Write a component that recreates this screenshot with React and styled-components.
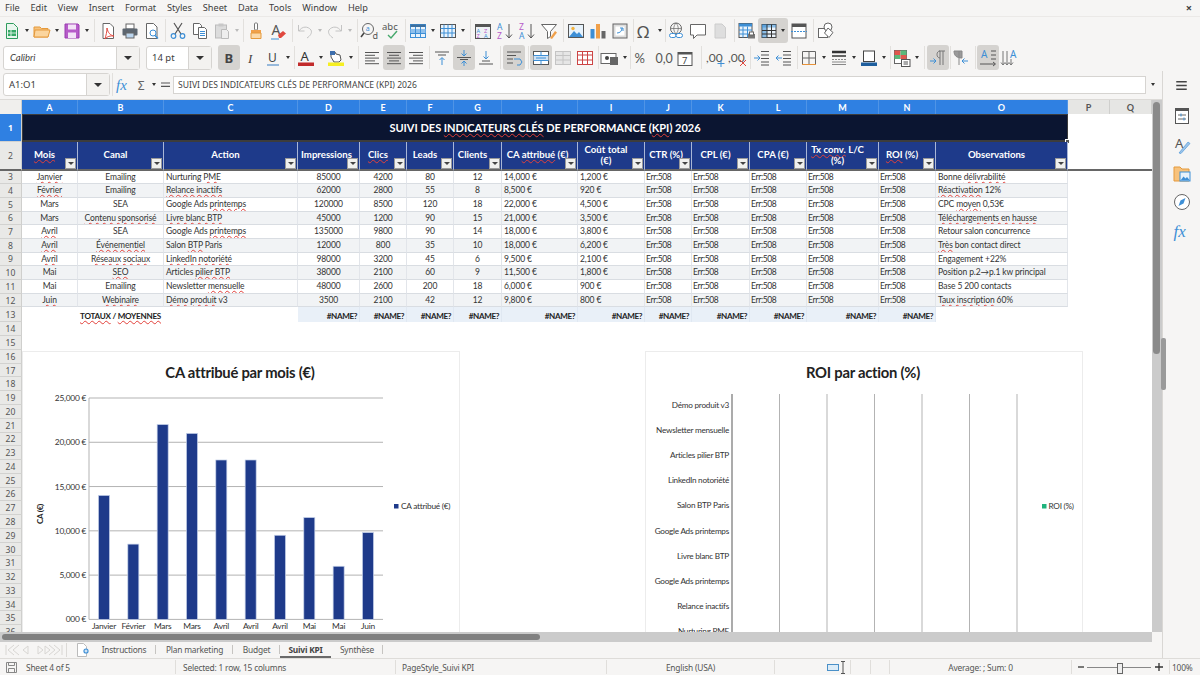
import React from 'react';
import styled, { createGlobalStyle } from 'styled-components';

const GlobalStyle = createGlobalStyle`
  html, body {
    margin: 0;
    padding: 0;
    background: #f6f5f4;
  }
  * {
    box-sizing: border-box;
  }
`;

const uiFont = `'Noto Sans', 'Open Sans', sans-serif`;
const cellFont = `Lato, 'Noto Sans', sans-serif`;

const Window = styled.div`
  width: 1200px;
  height: 675px;
  overflow: hidden;
  display: flex;
  flex-direction: column;
  background: #f6f5f4;
  color: #3d3d3d;
  font-family: ${uiFont};
`;

const MenuBar = styled.div`
  height: 17px;
  flex: none;
  display: flex;
  align-items: center;
  justify-content: space-between;
  padding: 0 8px 1px 5px;
  border-bottom: 1px solid #ebe9e7;
  font-size: 9.2px;
`;
const MenuList = styled.div`
  display: flex;
  gap: 10.8px;
`;
const CloseMark = styled.span`
  font-size: 11px;
  font-weight: 700;
  color: #444;
`;

const Toolbar = styled.div`
  height: 27px;
  flex: none;
  display: flex;
  align-items: center;
  padding-left: ${(p) => p.$pad || 1}px;
`;
const ToolBtn = styled.div`
  width: ${(p) => p.$w || 22}px;
  height: 25px;
  flex: none;
  display: flex;
  align-items: center;
  justify-content: center;
  border-radius: 3px;
  background: ${(p) => (p.$on ? '#d5d3d0' : 'transparent')};
`;
const Arrow = styled.div`
  width: 8px;
  height: 25px;
  flex: none;
  display: flex;
  align-items: center;
  justify-content: center;
  &::after {
    content: '';
    border-left: 2.5px solid transparent;
    border-right: 2.5px solid transparent;
    border-top: 3px solid ${(p) => (p.$off ? '#bbb' : '#333')};
  }
`;
const Sep = styled.div`
  width: ${(p) => p.$w || 5}px;
  height: 23px;
  flex: none;
  position: relative;
  &::after {
    content: '';
    position: absolute;
    left: 50%;
    top: 0;
    bottom: 0;
    width: 1px;
    background: #e2e0dd;
  }
`;
const Combo = styled.div`
  width: ${(p) => p.$w}px;
  height: ${(p) => p.$h || 24}px;
  margin-right: ${(p) => p.$mr || 0}px;
  flex: none;
  display: flex;
  border: 1px solid #d6d4d1;
  border-radius: 3px;
  background: #fff;
`;
const ComboText = styled.div`
  flex: 1;
  display: flex;
  align-items: center;
  padding-left: ${(p) => p.$pad || 5}px;
  font-size: 9.5px;
  font-family: ${(p) => (p.$italic ? cellFont : uiFont)};
  font-style: ${(p) => (p.$italic ? 'italic' : 'normal')};
`;
const ComboBtn = styled.div`
  width: 23px;
  flex: none;
  display: flex;
  align-items: center;
  justify-content: center;
  background: #f3f2f0;
  border-left: 1px solid #d6d4d1;
  &::after {
    content: '';
    border-left: 4px solid transparent;
    border-right: 4px solid transparent;
    border-top: 4px solid #333;
  }
`;

const Body = styled.div`
  flex: 1;
  min-height: 0;
  display: flex;
`;
const MainColumn = styled.div`
  width: 1162px;
  flex: none;
  display: flex;
  flex-direction: column;
`;
const FormulaBar = styled.div`
  height: 29px;
  flex: none;
  display: flex;
  align-items: center;
  padding: 0 0 1px 3px;
  border-bottom: 1px solid #dcdad7;
`;
const FormulaInput = styled.div`
  width: 973px;
  height: 18px;
  flex: none;
  display: flex;
  align-items: center;
  padding-left: 4px;
  background: #fff;
  border: 1px solid #d6d4d1;
  font-size: 8.6px;
  color: #444;
`;

const SheetArea = styled.div`
  flex: 1;
  min-height: 0;
  display: flex;
`;
const SheetViewport = styled.div`
  width: 1152px;
  flex: none;
  position: relative;
  overflow: hidden;
  background: #fff;
`;
const Grid = styled.div`
  display: grid;
  grid-template-columns: 22px 56px 86px 134px 62px 47px 47px 48px 76px 67px 47px 58px 57px 72px 57px 132px 42px 42px;
  grid-template-rows: 14px 28px 28.5px repeat(10, 13.7px) 15px repeat(23, 13.78px);
  font-family: ${cellFont};
`;
const ColHead = styled.div`
  display: flex;
  align-items: center;
  justify-content: center;
  font-size: 9px;
  font-weight: 700;
  color: ${(p) => (p.$sel ? '#fff' : '#555')};
  background: ${(p) => (p.$sel ? '#2f80e2' : '#e6e6e4')};
  border-right: 1px solid ${(p) => (p.$sel ? '#4f94e6' : '#cfcfcd')};
`;
const Corner = styled.div`
  background: #f0efed;
  border-right: 1px solid #cfcfcd;
`;
const RowHead = styled.div`
  grid-column: 1;
  display: flex;
  align-items: center;
  justify-content: center;
  overflow: hidden;
  padding-top: 1px;
  font-family: ${uiFont};
  font-size: 8.6px;
  font-weight: ${(p) => (p.$sel ? 700 : 400)};
  color: ${(p) => (p.$sel ? '#fff' : '#555')};
  background: ${(p) => (p.$sel ? '#2f80e2' : '#e9e9e7')};
  border-right: 1px solid #cfcfcd;
  border-bottom: ${(p) => (p.$frozen ? '2px solid #666' : '1px solid #d2d2d0')};
`;
const TitleCell = styled.div`
  grid-column: 2 / span 15;
  position: relative;
  display: flex;
  align-items: center;
  justify-content: center;
  background: #0b1531;
  border: 1px solid #3c3c3c;
  border-bottom-width: 2px;
  color: #fff;
  font-size: 11px;
  font-weight: 700;
`;
const FillHandle = styled.span`
  position: absolute;
  right: -3px;
  bottom: -4px;
  width: 5px;
  height: 5px;
  background: #555;
  border: 1px solid #fff;
`;
const HeadCell = styled.div`
  position: relative;
  display: flex;
  align-items: center;
  justify-content: center;
  padding: 0 ${(p) => (p.$narrow ? 6 : 12)}px 1px 2px;
  text-align: center;
  line-height: 11px;
  white-space: pre-line;
  background: #1e3a8a;
  border-right: 1px solid #a9b6d6;
  border-bottom: 2px solid #666;
  color: #fff;
  font-size: 9.6px;
  font-weight: 700;
`;
const FilterBtn = styled.span`
  position: absolute;
  right: 1px;
  bottom: 0;
  width: 11px;
  height: 11px;
  display: flex;
  align-items: center;
  justify-content: center;
  background: #f0f0ee;
  border: 1px solid #9a9a9a;
  &::after {
    content: '';
    border-left: 3px solid transparent;
    border-right: 3px solid transparent;
    border-top: 3px solid #444;
  }
`;
const Cell = styled.div`
  display: flex;
  align-items: flex-start;
  justify-content: ${(p) => p.$align || 'flex-start'};
  padding: 1px ${(p) => (p.$tight ? 1 : 2)}px 0;
  overflow: hidden;
  white-space: nowrap;
  line-height: 10px;
  font-size: 8.5px;
  letter-spacing: ${(p) => (p.$tight ? -0.35 : -0.12)}px;
  color: #333;
  background: ${(p) => (p.$alt ? '#f1f3f5' : '#fff')};
  border-right: 1px solid #e2e5ea;
  border-bottom: 1px solid #d9dde2;
`;
const TotalLabel = styled.div`
  grid-column: 2 / span 3;
  display: flex;
  align-items: center;
  padding: 2px 0 0 58px;
  font-size: 8.1px;
  font-weight: 700;
  letter-spacing: -0.25px;
  color: #222;
  white-space: nowrap;
`;
const TotalCell = styled.div`
  display: flex;
  align-items: center;
  justify-content: flex-end;
  padding: 2px 2px 0 0;
  font-size: 8.1px;
  font-weight: 700;
  letter-spacing: -0.4px;
  color: #222;
  background: #e9f0f8;
  border-right: 1px solid #e0e8f2;
`;
const Blank = styled.div`
  grid-column: ${(p) => p.$col || 'auto'};
  border-bottom: ${(p) => (p.$frozen ? '2px solid #666' : 'none')};
`;
const Wavy = styled.span`
  text-decoration: underline wavy #e2403a;
  text-decoration-thickness: 1px;
  text-underline-offset: 0.5px;
`;

const ChartBox = styled.div`
  position: absolute;
  left: ${(p) => p.$left}px;
  top: 251px;
  width: ${(p) => p.$width}px;
  height: 300px;
  background: #fff;
  border: 1px solid #ececec;
`;
const ChartSvg = styled.svg`
  display: block;
  font-family: ${cellFont};
  letter-spacing: -0.25px;
`;

const VScroll = styled.div`
  width: 10px;
  flex: none;
  position: relative;
  background: #cbcbcb;
`;
const VThumb = styled.div`
  position: absolute;
  left: 1px;
  top: 2px;
  width: 7px;
  height: 252px;
  border-radius: 4px;
  background: #8a8a8a;
`;
const HScroll = styled.div`
  height: 10px;
  width: 1152px;
  flex: none;
  display: flex;
  align-items: center;
  padding-left: 2px;
  background: #cbcbcb;
`;
const HThumb = styled.div`
  width: 538px;
  height: 6px;
  border-radius: 3px;
  background: #808080;
`;

const TabBar = styled.div`
  height: 16px;
  flex: none;
  display: flex;
  align-items: center;
  font-size: 8.4px;
  letter-spacing: -0.2px;
  color: #555;
`;
const NavGroup = styled.div`
  width: 66px;
  padding-left: 5px;
  display: flex;
  align-items: center;
`;
const AddTab = styled.div`
  width: 26px;
  padding-left: 9px;
  border-left: 1px solid #dcdad7;
  display: flex;
  align-items: center;
`;
const Tab = styled.div`
  height: 16px;
  width: ${(p) => p.$w}px;
  display: flex;
  align-items: center;
  justify-content: center;
  position: relative;
  font-weight: ${(p) => (p.$on ? 700 : 400)};
  color: ${(p) => (p.$on ? '#444' : '#555')};
  border-bottom: 2px solid ${(p) => (p.$on ? '#6a6a6a' : 'transparent')};
  &::after {
    content: '';
    display: ${(p) => (p.$bar ? 'block' : 'none')};
    position: absolute;
    right: 0;
    top: 3px;
    height: 9px;
    width: 1px;
    background: #c6c4c1;
  }
`;

const Sidebar = styled.div`
  flex: 1;
  border-left: 1px solid #d9d7d4;
  display: flex;
  flex-direction: column;
  align-items: center;
  position: relative;
`;
const SideMenu = styled.div`
  height: 29px;
  display: flex;
  align-items: center;
  margin-bottom: 2px;
`;
const SideIcon = styled.div`
  height: 28.6px;
  display: flex;
  align-items: center;
  justify-content: center;
`;
const SideHandle = styled.div`
  position: absolute;
  left: -2px;
  top: 267px;
  width: 5px;
  height: 52px;
  border-radius: 2px;
  background: #9a9a9a;
`;

const StatusBar = styled.div`
  height: 17px;
  flex: none;
  display: flex;
  align-items: center;
  border-top: 1px solid #dedcd9;
  font-size: 8.4px;
  letter-spacing: -0.2px;
  color: #555;
`;
const StatusCell = styled.div`
  width: ${(p) => p.$w}px;
  height: 14px;
  flex: none;
  display: flex;
  align-items: center;
  justify-content: ${(p) => p.$align || 'flex-start'};
  padding-left: ${(p) => p.$pad || 0}px;
  gap: ${(p) => p.$gap || 0}px;
  border-right: 1px solid ${(p) => (p.$plain ? 'transparent' : '#e0dedb')};
`;
const ZoomTrack = styled.div`
  width: 64px;
  height: 1px;
  background: #888;
  position: relative;
  margin: 0 4px 0 3px;
  &::after {
    content: '';
    position: absolute;
    left: 30px;
    top: -4px;
    width: 4px;
    height: 9px;
    background: #eee;
    border: 1px solid #666;
  }
`;

const Svg = ({ size = 20, children }) => (
  <svg width={size} height={size} viewBox="0 0 20 20" fill="none">
    {children}
  </svg>
);

const T = ({ x, y, s = 8, c = '#333', w = 400, st = 'normal', f = 'Noto Sans', children }) => (
  <text x={x} y={y} fontSize={s} fill={c} fontWeight={w} fontStyle={st} fontFamily={f}>
    {children}
  </text>
);

const lines = (arr, c = '#555') =>
  arr.map(([x1, y1, x2, y2], i) => <line key={i} x1={x1} y1={y1} x2={x2} y2={y2} stroke={c} />);

const alignLines = (rows) => lines(rows.map(([a, b], i) => [a, 4.5 + i * 2.8, b, 4.5 + i * 2.8]), '#555');

const icons = {
  newdoc: (
    <>
      <path d="M4.5 2.5h7l4 4v11h-11z" fill="#e9f6ee" stroke="#2f9c5d" />
      <rect x="6" y="9" width="8" height="6" fill="#36a866" />
      <path d="M9 9v6M6 12h8" stroke="#d6f0df" />
    </>
  ),
  open: (
    <>
      <path d="M2 6h6l1.5 1.5H16V16H2z" fill="#f7c27c" stroke="#e59a3c" />
      <path d="M3 9h15l-2 7H2z" fill="#fbd59e" stroke="#e59a3c" />
    </>
  ),
  save: (
    <>
      <path d="M3 3h13l1 1v13H3z" fill="#b65bc9" stroke="#9a3cb0" />
      <rect x="6" y="3.5" width="8" height="5" fill="#f3e2f7" />
      <rect x="6" y="11.5" width="8" height="5.5" fill="#f3e2f7" />
    </>
  ),
  pdf: (
    <>
      <path d="M5 2.5h7l3.5 3.5v11.5H5z" fill="#fff" stroke="#666" />
      <path d="M9 7c1 5 3 7 7 8-4-.5-7 .5-9 3 1-4 2-7 2-11z" stroke="#e0483e" />
    </>
  ),
  print: (
    <>
      <rect x="6" y="3" width="8" height="5" fill="#fff" stroke="#666" />
      <rect x="2.5" y="7.5" width="15" height="7" rx="1" fill="#5d6670" />
      <rect x="6" y="12" width="8" height="5" fill="#bcd6ef" stroke="#666" />
    </>
  ),
  preview: (
    <>
      <path d="M4.5 2.5h7l3.5 3.5v11.5H4.5z" fill="#fff" stroke="#666" />
      <circle cx="11" cy="12" r="3" stroke="#3d8fd6" />
      <path d="M13 14.5l3 3" stroke="#3d8fd6" strokeWidth="1.5" />
    </>
  ),
  cut: (
    <>
      <path d="M6 2l7 11M14 2L7 13" stroke="#555" strokeWidth="1.2" />
      <circle cx="5.5" cy="15" r="2.3" stroke="#3d8fd6" strokeWidth="1.2" />
      <circle cx="14.5" cy="15" r="2.3" stroke="#3d8fd6" strokeWidth="1.2" />
    </>
  ),
  copy: (
    <>
      <path d="M3.5 2.5h6l2 2v9h-8z" fill="#fff" stroke="#666" />
      <path d="M8.5 6.5h6l2 2v9h-8z" fill="#fff" stroke="#666" />
      {lines([[10, 10.5, 15, 10.5], [10, 12.5, 15, 12.5], [10, 14.5, 15, 14.5]], '#3d8fd6')}
    </>
  ),
  paste: (
    <>
      <rect x="3.5" y="4" width="11" height="13" fill="#dcdcdc" stroke="#bbb" />
      <rect x="6.5" y="2.5" width="5" height="3" fill="#c8c8c8" />
      <path d="M9.5 8.5h5l2 2v7h-7z" fill="#eee" stroke="#bbb" />
    </>
  ),
  clone: (
    <>
      <rect x="8.5" y="2" width="3" height="7" rx="1" fill="#fff" stroke="#777" />
      <path d="M5 9h10v3H5z" fill="#f0a04a" />
      <path d="M5 12h10v5.5H5z" fill="#fbd9a9" stroke="#e59a3c" />
    </>
  ),
  clear: (
    <>
      <T x="3.5" y="14" s="14" c="#555">A</T>
      <path d="M10 14l5-4 3 2.5-5 4.5h-2z" fill="#e0483e" />
      <path d="M3 18h8" stroke="#3d8fd6" />
    </>
  ),
  undo: (
    <>
      <path d="M3.5 4v6h6" stroke="#c4c4c4" />
      <path d="M4 10c3-5 9-5 12-1 1.5 3-1 6-4 8" stroke="#c4c4c4" />
    </>
  ),
  redo: (
    <>
      <path d="M16.5 4v6h-6" stroke="#c4c4c4" />
      <path d="M16 10c-3-5-9-5-12-1-1.5 3 1 6 4 8" stroke="#c4c4c4" />
    </>
  ),
  find: (
    <>
      <circle cx="8" cy="8" r="5.5" stroke="#666" />
      <path d="M4 12l-3 4" stroke="#444" strokeWidth="1.6" />
      <T x="5.8" y="10" s="7" c="#3d8fd6">a</T>
      <T x="12.5" y="18" s="9" c="#555">d</T>
    </>
  ),
  spell: (
    <>
      <T x="0" y="9" s="9.5" c="#555">abc</T>
      <path d="M6 14l3 3 6-7" stroke="#46a86c" strokeWidth="1.4" />
    </>
  ),
  tableblue: (
    <>
      <rect x="2.5" y="3.5" width="15" height="13" fill="#eaf3fb" stroke="#3d8fd6" />
      <rect x="2.5" y="3.5" width="15" height="2.5" fill="#3d6f9e" />
      <rect x="2.5" y="8" width="15" height="4" fill="#8fc0ec" />
      {lines([[7.5, 6, 7.5, 16.5], [12.5, 6, 12.5, 16.5], [2.5, 12.5, 17.5, 12.5]], '#3d8fd6')}
    </>
  ),
  tablegrid: (
    <>
      <rect x="2.5" y="3.5" width="15" height="13" fill="#eaf3fb" stroke="#555" />
      {lines([[6, 3.5, 6, 16.5], [10, 3.5, 10, 16.5], [14, 3.5, 14, 16.5], [2.5, 7.5, 17.5, 7.5], [2.5, 12, 17.5, 12]], '#3d8fd6')}
    </>
  ),
  sortblock: (
    <>
      <rect x="2.5" y="3.5" width="15" height="14" fill="#eef1f4" stroke="#555" />
      <rect x="2.5" y="3.5" width="15" height="2.5" fill="#555" />
      <T x="3.5" y="11.5" s="5.6" c="#3d8fd6">A</T>
      <T x="11" y="11.5" s="5.6" c="#b65bc9">Z</T>
      <T x="3.5" y="17" s="5.6" c="#b65bc9">Z</T>
      <T x="11" y="17" s="5.6" c="#3d8fd6">A</T>
    </>
  ),
  az: (
    <>
      <T x="2" y="9" s="8.5" c="#3d8fd6">A</T>
      <T x="2" y="18" s="8.5" c="#b65bc9">Z</T>
      <path d="M14 3v14M11 13.5l3 3.5 3-3.5" stroke="#555" />
    </>
  ),
  za: (
    <>
      <T x="2" y="9" s="8.5" c="#b65bc9">Z</T>
      <T x="2" y="18" s="8.5" c="#3d8fd6">A</T>
      <path d="M14 3v14M11 13.5l3 3.5 3-3.5" stroke="#555" />
    </>
  ),
  filter: (
    <>
      <path d="M2.5 3.5h15l-6 7v5l-3 2v-7z" fill="#fff" stroke="#666" />
      <path d="M11 17l5-7 2 1.5-5 6.5z" fill="#f0a04a" />
    </>
  ),
  image: (
    <>
      <rect x="2.5" y="3.5" width="15" height="13" fill="#e7f2fb" stroke="#555" />
      <circle cx="7" cy="7.5" r="1.7" fill="#f3b23e" />
      <path d="M3 16l5-6 3 3 2-2 4 5z" fill="#3d8fd6" />
    </>
  ),
  chart: (
    <>
      <rect x="2.5" y="8" width="4" height="9.5" fill="#3d8fd6" />
      <rect x="8" y="3" width="4" height="14.5" fill="#f0a04a" />
      <rect x="13.5" y="10" width="4" height="7.5" fill="#666" />
    </>
  ),
  pivot: (
    <>
      <rect x="3" y="3" width="14" height="14" fill="#ddd" stroke="#666" />
      <rect x="5.5" y="5.5" width="9" height="9" fill="#fff" />
      <path d="M7 12c3 0 5-2 5-5M10 7h3v3" stroke="#3d8fd6" />
    </>
  ),
  omega: <T x="2" y="16.5" s="17" c="#555">Ω</T>,
  link: (
    <>
      <circle cx="10" cy="7.5" r="5.5" stroke="#666" />
      <path d="M4.5 7.5h11M10 2c-3 3.5-3 7.5 0 11M10 2c3 3.5 3 7.5 0 11" stroke="#666" strokeWidth=".7" />
      <rect x="3.5" y="12.5" width="6.5" height="4" rx="2" stroke="#3d8fd6" fill="#fff" />
      <rect x="10" y="12.5" width="6.5" height="4" rx="2" stroke="#3d8fd6" fill="#fff" />
    </>
  ),
  comment: <path d="M2.5 3.5h15v10.5H9l-3.5 3.5V14h-3z" fill="#fff" stroke="#666" />,
  docoff: <path d="M5 3h7l3.5 3.5V17H5z" fill="#dedede" stroke="#ccc" />,
  freeze: (
    <>
      <rect x="2" y="2.5" width="13" height="14" fill="#eaf3fb" stroke="#555" />
      <rect x="2" y="2.5" width="13" height="3" fill="#3d8fd6" />
      {lines([[6, 5.5, 6, 16.5], [10.5, 5.5, 10.5, 16.5], [2, 9, 15, 9], [2, 13, 15, 13]], '#3d8fd6')}
      <rect x="11" y="13" width="7" height="4.5" fill="#777" />
      <rect x="12.5" y="11" width="4" height="3" fill="#fff" stroke="#666" />
    </>
  ),
  split: (
    <>
      <rect x="3" y="3.5" width="14" height="13" fill="#eaf3fb" stroke="#444" />
      <path d="M3 3.5h5v13H3z" fill="#3d8fd6" opacity=".55" />
      <path d="M3 3.5h14v3H3z" fill="#3d8fd6" opacity=".55" />
      {lines([[3, 9.5, 17, 9.5], [3, 13, 17, 13], [8, 3.5, 8, 16.5], [12.5, 3.5, 12.5, 16.5]], '#333')}
    </>
  ),
  headfoot: (
    <>
      <rect x="3" y="3" width="14" height="14" fill="#fff" stroke="#555" />
      <rect x="3" y="3" width="14" height="3" fill="#555" />
      <path d="M2 10.5h16" stroke="#3d8fd6" strokeDasharray="2 1" />
    </>
  ),
  shapes: (
    <>
      <rect x="2.5" y="7.5" width="9" height="9" fill="#fff" stroke="#666" />
      <circle cx="12" cy="6" r="4" fill="#fff" stroke="#666" />
      <path d="M12 7l5 4.5-4 5-4.5-4.5z" fill="#fff" stroke="#666" />
    </>
  ),
  bold: <T x="5.5" y="15" s="13" c="#444" w={700}>B</T>,
  italic: <T x="7" y="15" s="13" c="#444" st="italic" f="Liberation Serif">I</T>,
  under: (
    <>
      <T x="5" y="14" s="12" c="#444">U</T>
      <path d="M4 17h12" stroke="#6f9fd0" strokeWidth="1.4" />
    </>
  ),
  color: (
    <>
      <T x="4.5" y="13" s="13" c="#333">A</T>
      <rect x="2" y="14.5" width="16" height="3.5" fill="#c22b2b" />
    </>
  ),
  hilite: (
    <>
      <path d="M5 4h4l1 2 4 1 1 5-2 2H8L5 9z" fill="#fff" stroke="#555" />
      <rect x="4" y="3" width="5" height="4" fill="#3d6fae" />
      <rect x="2" y="14.5" width="16" height="3.5" fill="#f6ef22" />
    </>
  ),
  left: alignLines([[3, 17], [3, 13], [3, 17], [3, 13], [3, 17]]),
  center: alignLines([[3, 17], [5, 15], [3, 17], [5, 15], [3, 17]]),
  right: alignLines([[3, 17], [7, 17], [3, 17], [7, 17], [3, 17]]),
  vtop: (
    <>
      <path d="M3 4h14M6 7h8" stroke="#555" />
      <path d="M10 17v-7M7.5 12L10 9.5l2.5 2.5" stroke="#3d8fd6" />
    </>
  ),
  vmid: (
    <>
      <path d="M3 9.5h14M6 11.5h8" stroke="#555" />
      <path d="M10 2v6M7.5 5.5L10 8l2.5-2.5M10 18v-5M7.5 15.5L10 13l2.5 2.5" stroke="#3d8fd6" />
    </>
  ),
  vbot: (
    <>
      <path d="M3 16h14M6 13h8" stroke="#555" />
      <path d="M10 3v8M7.5 8.5L10 11l2.5-2.5" stroke="#3d8fd6" />
    </>
  ),
  wrap: (
    <>
      <path d="M3 4h14M3 7.5h9M3 11h6M3 15h6" stroke="#555" />
      <path d="M10 11h6l2 3-2 3h-3" stroke="#3d8fd6" />
    </>
  ),
  merge: (
    <>
      <rect x="2.5" y="3.5" width="15" height="13" fill="#fff" stroke="#555" />
      <rect x="2.5" y="7.5" width="15" height="5" fill="#cfe3f6" />
      {lines([[2.5, 7.5, 17.5, 7.5], [2.5, 12.5, 17.5, 12.5]], '#3d8fd6')}
      <path d="M5 10h10M10 3.5v4M10 12.5v4" stroke="#3d8fd6" />
    </>
  ),
  mergeoff: (
    <>
      <rect x="2.5" y="3.5" width="15" height="13" fill="#e6e6e6" stroke="#c4c4c4" />
      {lines([[2.5, 7.5, 17.5, 7.5], [2.5, 12, 17.5, 12], [10, 3.5, 10, 16.5]], '#c4c4c4')}
    </>
  ),
  splitred: (
    <>
      <rect x="2.5" y="3.5" width="15" height="13" fill="#fff" stroke="#c44" />
      {lines([[2.5, 7, 17.5, 7], [2.5, 12, 17.5, 12], [7.5, 3.5, 7.5, 16.5], [12.5, 3.5, 12.5, 16.5]], '#c44')}
    </>
  ),
  numfmt: (
    <>
      <rect x="1" y="5.5" width="15" height="10" fill="#fff" stroke="#666" />
      <circle cx="7" cy="10" r="2" fill="#444" />
      <rect x="10" y="9" width="8" height="8" fill="#666" />
    </>
  ),
  percent: <T x="3.5" y="15" s="13" c="#555" f="Lato">%</T>,
  number: <T x="2.5" y="15" s="12.5" c="#555" f="Lato">0,0</T>,
  date: (
    <>
      <rect x="3" y="4.5" width="14" height="13" fill="#fff" stroke="#555" />
      <path d="M3 4.5h14v2H3z" fill="#555" />
      <T x="7" y="15.5" s="9.5" c="#444">7</T>
    </>
  ),
  decadd: (
    <>
      <T x="0" y="14" s="12" c="#555" f="Lato">,00</T>
      <path d="M15 12v7M11.5 15.5h7" stroke="#3d8fd6" />
    </>
  ),
  decdel: (
    <>
      <T x="0" y="14" s="12" c="#555" f="Lato">,00</T>
      <path d="M12 12l6 6M18 12l-6 6" stroke="#e0483e" />
    </>
  ),
  indent: (
    <>
      <path d="M9 3.5h8M9 7h8M9 10.5h8M9 14h8M9 17h8" stroke="#555" />
      <path d="M2 10h6M5.5 7.5L8 10l-2.5 2.5" stroke="#3d8fd6" />
    </>
  ),
  outdent: (
    <>
      <path d="M9 3.5h8M9 7h8M9 10.5h8M9 14h8M9 17h8" stroke="#555" />
      <path d="M8 10H2M4.5 7.5L2 10l2.5 2.5" stroke="#3d8fd6" />
    </>
  ),
  borders: (
    <>
      <path d="M3.5 16.5v-13h13v13" stroke="#666" />
      <path d="M3.5 10h13M10 3.5v13" stroke="#666" />
      <path d="M3 16.5h14" stroke="#e8933a" />
    </>
  ),
  borderstyle: (
    <>
      <path d="M3 4h14" stroke="#333" strokeWidth="2.5" />
      <path d="M3 8h14" stroke="#333" strokeWidth="1.5" />
      <path d="M3 11.5h14" stroke="#888" strokeDasharray="2 1" />
      <path d="M3 14h14M3 16.5h14" stroke="#888" />
    </>
  ),
  bordercolor: (
    <>
      <rect x="4.5" y="3" width="11" height="10.5" fill="#fff" stroke="#444" />
      <rect x="2" y="14.5" width="16" height="3.5" fill="#1f5f9e" />
    </>
  ),
  condfmt: (
    <>
      <rect x="2.5" y="2.5" width="12" height="13" fill="#fff" stroke="#666" />
      <rect x="2.5" y="2.5" width="6" height="4.5" fill="#e0584e" />
      <rect x="8.5" y="2.5" width="6" height="4.5" fill="#5cb87a" />
      <rect x="2.5" y="7" width="6" height="4" fill="#5cb87a" />
      <rect x="8.5" y="7" width="6" height="4" fill="#e0584e" />
      <rect x="9.5" y="11.5" width="8.5" height="7" fill="#fff" stroke="#555" />
      <path d="M11.5 14h4.5M11.5 16h4.5" stroke="#555" />
    </>
  ),
  ltr: (
    <>
      <path d="M11 3h6M12 3v14M15 3v14M12 3C8 3 8 10 12 10" stroke="#777" />
      <path d="M2 13h6M5.5 10.5L8 13l-2.5 2.5" stroke="#3d8fd6" />
    </>
  ),
  rtl: (
    <>
      <path d="M3 3h8v7C6 10 3 8 3 3zM8 3v14M3 3" stroke="#888" fill="#9a9a9a" />
      <path d="M17 13h-6M13.5 10.5L11 13l2.5 2.5" stroke="#3d8fd6" />
    </>
  ),
  htext: (
    <>
      <T x="3" y="10" s="10" c="#3d8fd6">A</T>
      <path d="M13 3h5M13 7h5M13 11h5M2 16h15M15 14l2.5 2-2.5 2" stroke="#555" />
    </>
  ),
  vtext: (
    <>
      <T x="10" y="10" s="10" c="#3d8fd6">A</T>
      <path d="M3 3v14M7 3v14M11 11v6M1 14.5L3 17l2-2.5M5 14.5L7 17l2-2.5M9 14.5l2 2.5 2-2.5" stroke="#777" />
    </>
  ),
  fx: <T x="2" y="15" s="15" c="#3d8fd6" st="italic" f="Liberation Serif">fx</T>,
  sigma: <T x="3.5" y="16" s="16" c="#666">Σ</T>,
  equal: <path d="M4 8h12M4 12.5h12" stroke="#555" strokeWidth="1.6" />,
  burger: <path d="M3 5h14M3 10h14M3 15h14" stroke="#444" strokeWidth="1.7" />,
  props: (
    <>
      <rect x="3.5" y="2.5" width="13" height="15" fill="#fff" stroke="#555" />
      <path d="M3.5 2.5h13v2.5h-13z" fill="#555" />
      <path d="M6 9h8M6 13h8" stroke="#666" />
      <path d="M9 7.5v3M12 11.5v3" stroke="#3d8fd6" />
    </>
  ),
  styles: (
    <>
      <T x="3" y="13" s="13" c="#555">A</T>
      <path d="M7 18l9-11 2 1.5-9 10z" fill="#9ec5ea" stroke="#3d8fd6" strokeWidth=".6" />
    </>
  ),
  gallery: (
    <>
      <path d="M2 4h6l2 2h7v12H2z" fill="#f7c27c" stroke="#e59a3c" />
      <rect x="8" y="9" width="10" height="9" fill="#e7f2fb" stroke="#3d8fd6" />
      <path d="M8.5 17.5l3-4 2 2 1.5-1.5 3 3.5z" fill="#3d8fd6" />
    </>
  ),
  navigator: (
    <>
      <circle cx="10" cy="10" r="7.5" fill="#fff" stroke="#666" />
      <path d="M13.5 6l-2 5.5L6.5 14l2-5.5z" fill="#3d8fd6" />
    </>
  ),
  func: <T x="1.5" y="16" s="17" c="#3d8fd6" st="italic" f="Liberation Serif">fx</T>,
};

const Icon = ({ name, size }) => <Svg size={size}>{icons[name]}</Svg>;

const renderTools = (items) =>
  items.map((it, i) => {
    if (it === '|') return <Sep key={i} />;
    if (it === 'v') return <Arrow key={i} />;
    if (it === 'x') return <Arrow key={i} $off />;
    if (Array.isArray(it)) return <Sep key={i} $w={it[0]} />;
    if (it.startsWith('*'))
      return (
        <ToolBtn key={i} $on>
          <Icon name={it.slice(1)} />
        </ToolBtn>
      );
    if (it.startsWith('+'))
      return (
        <ToolBtn key={i} $on $w={30}>
          <Icon name={it.slice(1)} />
          <Arrow />
        </ToolBtn>
      );
    return (
      <ToolBtn key={i}>
        <Icon name={it} />
      </ToolBtn>
    );
  });

const topTools = [
  'newdoc', 'v', 'open', 'v', 'save', 'v', [6], 'pdf', 'print', 'preview', [4], 'cut', 'copy', 'paste', 'x', [4],
  'clone', 'clear', [5], 'undo', 'x', 'redo', 'x', [5], 'find', 'spell', [4], 'tableblue', 'v', 'tablegrid', 'v', [5],
  'sortblock', 'az', 'za', 'filter', [5], 'image', 'chart', 'pivot', [3], 'omega', 'v', [1], 'link', 'comment', 'docoff', [5],
  'freeze', '+split', 'headfoot', [5], 'shapes',
];

const formatTools = [
  'italic', 'under', 'v', [3], 'color', 'v', 'hilite', 'v', [6], 'left', '*center', 'right', [4], 'vtop', '*vmid', 'vbot', [6],
  '*wrap', [5], '*merge', 'mergeoff', 'splitred', [3], 'numfmt', 'v', [1], 'percent', 'number', 'date', [9], 'decadd', 'decdel', [2],
  'indent', 'outdent', [3], 'borders', 'v', 'borderstyle', 'v', 'bordercolor', 'v', [3], 'condfmt', 'v', [6], '*ltr', [1], 'rtl', [5], '*htext', 'vtext',
];

const menus = ['File', 'Edit', 'View', 'Insert', 'Format', 'Styles', 'Sheet', 'Data', 'Tools', 'Window', 'Help'];
const columns = ['A', 'B', 'C', 'D', 'E', 'F', 'G', 'H', 'I', 'J', 'K', 'L', 'M', 'N', 'O'];

const headers = [
  '~Mois~', 'Canal', 'Action', 'Impressions', '~Clics~', 'Leads', 'Clients', 'CA ~attribué~ (€)', 'Coût total\n(€)',
  'CTR (%)', 'CPL (€)', 'CPA (€)', '~Tx conv.~ L/C\n(%)', '~ROI~ (%)', 'Observations',
];
const narrowHeads = ['Impressions', 'CA ~attribué~ (€)', 'CTR (%)'];

const rows = [
  ['~Janvier~', 'Emailing', 'Nurturing ~PME~', 85000, 4200, 80, 12, '14,000 €', '1,200 €', 'Bonne ~délivrabilité~'],
  ['~Février~', 'Emailing', '~Relance inactifs~', 62000, 2800, 55, 8, '8,500 €', '920 €', '~Réactivation~ 12%'],
  ['Mars', 'SEA', 'Google Ads ~printemps~', 120000, 8500, 120, 18, '22,000 €', '4,500 €', 'CPC ~moyen~ 0,53€'],
  ['Mars', '~Contenu sponsorisé~', '~Livre blanc BTP~', 45000, 1200, 90, 15, '21,000 €', '3,500 €', '~Téléchargements en hausse~'],
  ['~Avril~', 'SEA', 'Google Ads ~printemps~', 135000, 9800, 90, 14, '18,000 €', '3,800 €', 'Retour salon concurrence'],
  ['~Avril~', '~Événementiel~', 'Salon ~BTP~ Paris', 12000, 800, 35, 10, '18,000 €', '6,200 €', '~Très~ bon contact direct'],
  ['~Avril~', '~Réseaux sociaux~', '~LinkedIn notoriété~', 98000, 3200, 45, 6, '9,500 €', '2,100 €', 'Engagement +22%'],
  ['Mai', '~SEO~', 'Articles ~pilier BTP~', 38000, 2100, 60, 9, '11,500 €', '1,800 €', 'Position p.2→p.1 kw principal'],
  ['Mai', 'Emailing', 'Newsletter ~mensuelle~', 48000, 2600, 200, 18, '6,000 €', '900 €', 'Base 5 200 contacts'],
  ['~Juin~', '~Webinaire~', '~Démo produit~ v3', 3500, 2100, 42, 12, '9,800 €', '800 €', '~Taux inscription~ 60%'],
];

const revenue = [14000, 8500, 22000, 21000, 18000, 18000, 9500, 11500, 6000, 9800];
const months = ['Janvier', 'Février', 'Mars', 'Mars', 'Avril', 'Avril', 'Avril', 'Mai', 'Mai', 'Juin'];
const actions = [
  'Démo produit v3', 'Newsletter mensuelle', 'Articles pilier BTP', 'LinkedIn notoriété', 'Salon BTP Paris',
  'Google Ads printemps', 'Livre blanc BTP', 'Google Ads printemps', 'Relance inactifs', 'Nurturing PME',
];

// "~mot~" marks the words LibreOffice underlines as misspelled
const spell = (text) => (
  <span>
    {String(text)
      .split(/(~[^~]+~)/)
      .map((part, i) =>
        part.startsWith('~') ? <Wavy key={i}>{part.slice(1, -1)}</Wavy> : <React.Fragment key={i}>{part}</React.Fragment>
      )}
  </span>
);

const RevenueChart = () => {
  const top = 46;
  const bottom = 267.4;
  const perEuro = (bottom - top) / 25000;
  return (
    <ChartBox $left={22} $width={438}>
      <ChartSvg width="436" height="298">
        <text x="217" y="26" textAnchor="middle" fontSize="14.8" fontWeight="700" fill="#222">
          CA attribué par mois (€)
        </text>
        {[0, 1, 2, 3, 4, 5].map((n) => {
          const y = bottom - n * 44.28;
          return (
            <g key={n}>
              <line x1="66" x2="360" y1={y} y2={y} stroke="#b3b3b3" />
              <text x="63" y={y + 3} textAnchor="end" fontSize="8.4" fill="#333">
                {n === 0 ? '000 €' : `${n * 5},000 €`}
              </text>
            </g>
          );
        })}
        <line x1="66" x2="66" y1={top} y2={bottom} stroke="#b3b3b3" />
        {revenue.map((v, i) => {
          const cx = 81 + i * 29.33;
          const h = v * perEuro;
          return (
            <g key={i}>
              <rect x={cx - 5.5} y={bottom - h} width="11" height={h} fill="#1e3a8a" stroke="#c3cfe8" strokeWidth=".7" />
              <text x={cx} y={bottom + 10} textAnchor="middle" fontSize="8.4" fill="#333">
                {months[i]}
              </text>
            </g>
          );
        })}
        <text transform="translate(20 162) rotate(-90)" textAnchor="middle" fontSize="8" fontWeight="700" fill="#222">
          CA (€)
        </text>
        <rect x="371" y="152" width="4.5" height="4.5" fill="#1e3a8a" />
        <text x="378" y="157" fontSize="8.3" fill="#333">
          CA attribué (€)
        </text>
      </ChartSvg>
    </ChartBox>
  );
};

const RoiChart = () => (
  <ChartBox $left={645} $width={438}>
    <ChartSvg width="436" height="298">
      <text x="217" y="26" textAnchor="middle" fontSize="14.8" fontWeight="700" fill="#222">
        ROI par action (%)
      </text>
      <line x1="86" x2="86" y1="42" y2="298" stroke="#8f8f8f" strokeWidth="1.5" />
      {[1, 2, 3, 4, 5, 6].map((n) => (
        <line key={n} x1={86 + n * 47.5} x2={86 + n * 47.5} y1="42" y2="298" stroke="#b3b3b3" />
      ))}
      {actions.map((a, i) => (
        <text key={i} x="83" y={56 + i * 25.1} textAnchor="end" fontSize="8.2" fill="#333">
          {a}
        </text>
      ))}
      <rect x="396" y="152" width="4.5" height="4.5" fill="#1fb37c" />
      <text x="402.5" y="157" fontSize="8.2" fill="#333">
        ROI (%)
      </text>
    </ChartSvg>
  </ChartBox>
);

const SheetGrid = () => {
  const blankRows = [];
  for (let n = 14; n <= 36; n += 1) {
    blankRows.push(
      <React.Fragment key={n}>
        <RowHead>{n}</RowHead>
        <Blank $col="2 / -1" />
      </React.Fragment>
    );
  }
  return (
    <Grid>
      <Corner />
      {columns.map((c) => (
        <ColHead key={c} $sel>
          {c}
        </ColHead>
      ))}
      <ColHead>P</ColHead>
      <ColHead>Q</ColHead>

      <RowHead $sel>1</RowHead>
      <TitleCell>
        {spell('SUIVI DES ~INDICATEURS CLÉS~ DE PERFORMANCE (~KPI~) 2026')}
        <FillHandle />
      </TitleCell>
      <Blank $col="17 / -1" />

      <RowHead $frozen>2</RowHead>
      {headers.map((h) => (
        <HeadCell key={h} $narrow={narrowHeads.includes(h)}>
          {spell(h)}
          <FilterBtn />
        </HeadCell>
      ))}
      <Blank $col="17 / -1" $frozen />

      {rows.map((r, i) => {
        const alt = i % 2 === 1;
        return (
          <React.Fragment key={i}>
            <RowHead>{i + 3}</RowHead>
            <Cell $align="center" $alt={alt}>{spell(r[0])}</Cell>
            <Cell $align="center" $alt={alt}>{spell(r[1])}</Cell>
            <Cell $alt={alt}>{spell(r[2])}</Cell>
            {r.slice(3, 7).map((v, k) => (
              <Cell key={k} $align="center" $alt={alt}>{v}</Cell>
            ))}
            <Cell $alt={alt}>{r[7]}</Cell>
            <Cell $alt={alt}>{r[8]}</Cell>
            {[0, 1, 2, 3, 4].map((k) => (
              <Cell key={k} $alt={alt} $tight>Err:508</Cell>
            ))}
            <Cell $alt={alt}>{spell(r[9])}</Cell>
            <Blank $col="17 / -1" />
          </React.Fragment>
        );
      })}

      <RowHead>13</RowHead>
      <TotalLabel>{spell('~TOTAUX~ / ~MOYENNES~')}</TotalLabel>
      {[...Array(11)].map((_, k) => (
        <TotalCell key={k}>#NAME?</TotalCell>
      ))}
      <Blank $col="16 / -1" />

      {blankRows}
    </Grid>
  );
};

const App = () => (
  <Window>
    <GlobalStyle />
    <MenuBar>
      <MenuList>
        {menus.map((m) => (
          <span key={m}>{m}</span>
        ))}
      </MenuList>
      <CloseMark>×</CloseMark>
    </MenuBar>

    <Toolbar>{renderTools(topTools)}</Toolbar>

    <Toolbar $pad={3}>
      <Combo $w={137} $mr={6}>
        <ComboText $italic $pad={6}>Calibri</ComboText>
        <ComboBtn />
      </Combo>
      <Combo $w={66} $mr={6}>
        <ComboText>14 pt</ComboText>
        <ComboBtn />
      </Combo>
      <ToolBtn $on>
        <Icon name="bold" />
      </ToolBtn>
      {renderTools(formatTools)}
    </Toolbar>

    <Body>
      <MainColumn>
        <FormulaBar>
          <Combo $w={107} $h={23}>
            <ComboText $pad={5}>A1:O1</ComboText>
            <ComboBtn />
          </Combo>
          <Sep $w={3} />
          <ToolBtn $w={22}>
            <Icon name="fx" />
          </ToolBtn>
          <ToolBtn $w={15}>
            <Icon name="sigma" size={18} />
          </ToolBtn>
          <Arrow />
          <ToolBtn $w={15}>
            <Icon name="equal" size={15} />
          </ToolBtn>
          <FormulaInput>SUIVI DES INDICATEURS CLÉS DE PERFORMANCE (KPI) 2026</FormulaInput>
          <ToolBtn $w={14}>
            <Arrow />
          </ToolBtn>
        </FormulaBar>

        <SheetArea>
          <SheetViewport>
            <SheetGrid />
            <RevenueChart />
            <RoiChart />
          </SheetViewport>
          <VScroll>
            <VThumb />
          </VScroll>
        </SheetArea>

        <HScroll>
          <HThumb />
        </HScroll>

        <TabBar>
          <NavGroup>
            <svg width="58" height="12" viewBox="0 0 58 12" fill="none" stroke="#d8d6d3">
              <path d="M1 1v10M9 1L3 6l6 5M14 1L8 6l6 5" />
              <path d="M23 2l-5 4 5 4zM33 2l5 4-5 4z" />
              <path d="M40 2l5 4-5 4zM44 1l6 5-6 5M49 1l6 5-6 5M57 1v10" />
            </svg>
          </NavGroup>
          <AddTab>
            <svg width="14" height="14" viewBox="0 0 14 14" fill="none">
              <path d="M1.5.5h6l3 3v10h-9z" fill="#fff" stroke="#bbb" />
              <circle cx="10" cy="8" r="2.6" fill="#3d8fd6" />
              <path d="M10 6.5v3M8.5 8h3" stroke="#fff" />
            </svg>
          </AddTab>
          <Tab $w={64} $bar>Instructions</Tab>
          <Tab $w={77} $bar>Plan marketing</Tab>
          <Tab $w={47} $bar>Budget</Tab>
          <Tab $w={51} $on>Suivi KPI</Tab>
          <Tab $w={52} $bar>Synthèse</Tab>
        </TabBar>
      </MainColumn>

      <Sidebar>
        <SideMenu>
          <Icon name="burger" size={15} />
        </SideMenu>
        {['props', 'styles', 'gallery', 'navigator', 'func'].map((n) => (
          <SideIcon key={n}>
            <Icon name={n} />
          </SideIcon>
        ))}
        <SideHandle />
      </Sidebar>
    </Body>

    <StatusBar>
      <StatusCell $w={176} $pad={5} $gap={8}>
        <svg width="13" height="13" viewBox="0 0 13 13" fill="none" stroke="#888">
          <path d="M1.5 1.5h10v10h-10zM3.5 1.5v3h6v-3M3.5 11.5v-4h6v4" />
        </svg>
        Sheet 4 of 5
      </StatusCell>
      <StatusCell $w={220} $pad={7}>Selected: 1 row, 15 columns</StatusCell>
      <StatusCell $w={211} $pad={6}>PageStyle_Suivi KPI</StatusCell>
      <StatusCell $w={168} $align="center">English (USA)</StatusCell>
      <StatusCell $w={76} $pad={52} $gap={3}>
        <svg width="20" height="13" viewBox="0 0 20 13" fill="none">
          <rect x=".5" y="3.5" width="11" height="6" fill="#dcecf8" stroke="#4a90c8" />
          <path d="M14 .5h4M16 .5v12M14 12.5h4" stroke="#555" />
        </svg>
      </StatusCell>
      <StatusCell $w={20} />
      <StatusCell $w={19} />
      <StatusCell $w={182} $align="center">Average: ; Sum: 0</StatusCell>
      <StatusCell $w={98} $pad={6}>
        <svg width="6" height="6" viewBox="0 0 6 6" stroke="#333" strokeWidth="1.3">
          <path d="M0 3h6" />
        </svg>
        <ZoomTrack />
        <svg width="8" height="8" viewBox="0 0 8 8" stroke="#333" strokeWidth="1.3">
          <path d="M0 4h8M4 0v8" />
        </svg>
      </StatusCell>
      <StatusCell $w={30} $plain $pad={2}>100%</StatusCell>
    </StatusBar>
  </Window>
);

export default App;
